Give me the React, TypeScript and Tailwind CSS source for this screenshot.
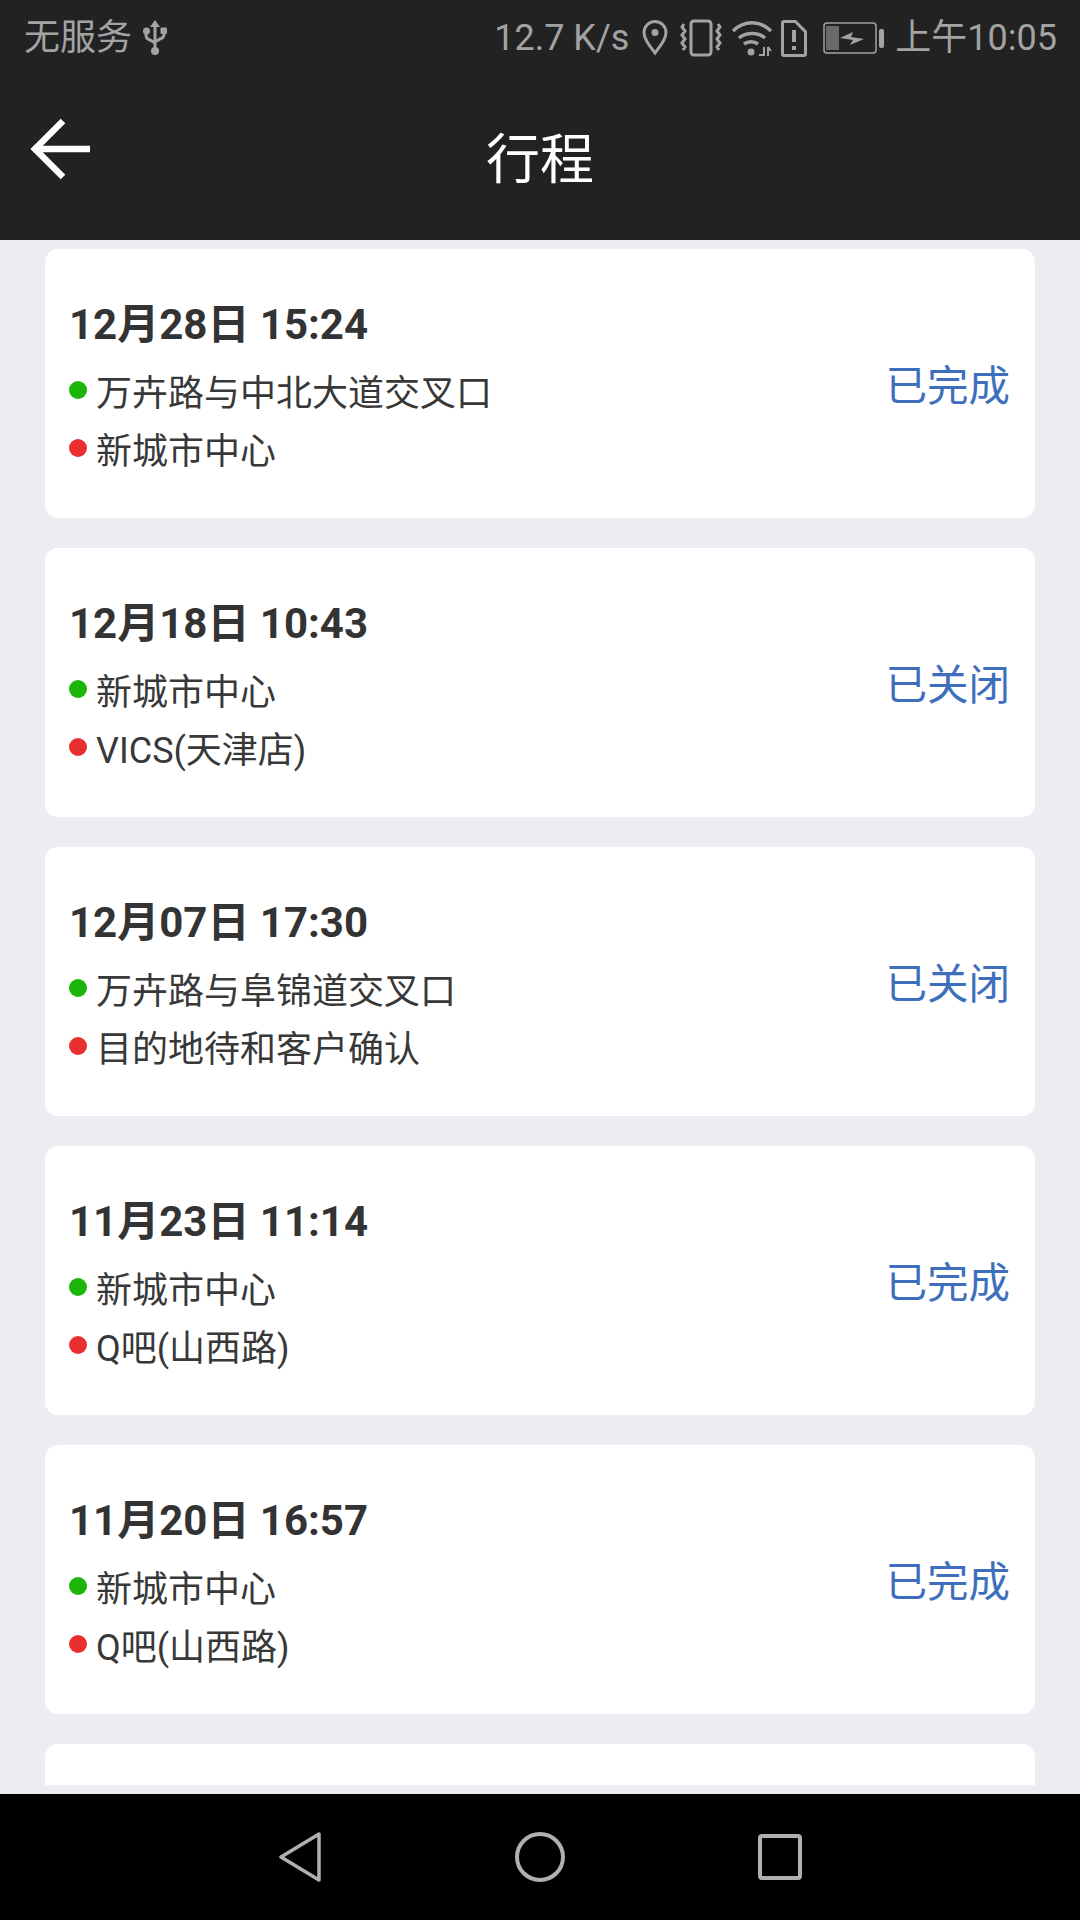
const font = "font-['Roboto','Noto_Sans_CJK_SC',sans-serif]";

type Trip = { date: string; from: string; to: string; status: string };

const trips: Trip[] = [
  { date: "12月28日 15:24", from: "万卉路与中北大道交叉口", to: "新城市中心", status: "已完成" },
  { date: "12月18日 10:43", from: "新城市中心", to: "VICS(天津店)", status: "已关闭" },
  { date: "12月07日 17:30", from: "万卉路与阜锦道交叉口", to: "目的地待和客户确认", status: "已关闭" },
  { date: "11月23日 11:14", from: "新城市中心", to: "Q吧(山西路)", status: "已完成" },
  { date: "11月20日 16:57", from: "新城市中心", to: "Q吧(山西路)", status: "已完成" },
];

function StatusBar() {
  return (
    <div className="h-[76px] pl-[24px] pr-[23px] flex items-center justify-between text-[#a3a3a3]">
      <div className="flex items-center gap-[11px]">
        <span className="text-[36px] leading-none">无服务</span>
        <svg width="24" height="36" viewBox="0 0 24 36" fill="none" stroke="#a3a3a3" strokeWidth="3">
          <path d="M12 3v28M3 12v3q0 4 4 5l5 3M21 12v2q0 4-4 5l-5 3" />
          <path d="M12 0l-5 7h10z" fill="#a3a3a3" stroke="none" />
          <circle cx="12" cy="31" r="4" fill="#a3a3a3" stroke="none" />
          <circle cx="3.5" cy="11" r="3.500" fill="#a3a3a3" stroke="none" />
          <rect x="17.500" y="7.500" width="6.500" height="6.500" rx="1" fill="#a3a3a3" stroke="none" />
        </svg>
      </div>
      <div className="flex items-center">
        <span className="text-[36px] leading-none mr-[13px]">12.7 K/s</span>
        <svg width="26" height="36" viewBox="0 0 26 36" fill="none" stroke="#a3a3a3" strokeWidth="3" className="mr-[12px]">
          <path d="M13 33C7 25 2 19 2 12.500a11 11 0 0 1 22 0C24 19 19 25 13 33z" />
          <circle cx="13" cy="12.500" r="3.500" fill="#a3a3a3" stroke="none" />
        </svg>
        <svg width="42" height="38" viewBox="0 0 42 38" fill="none" stroke="#a3a3a3" strokeWidth="3" className="mr-[10px]">
          <rect x="11" y="2" width="20" height="34" rx="3" strokeWidth="3" />
          <path d="M4 5l-2 3 3 4-3 4 3 4-3 4 3 4-2 3M38 5l2 3-3 4 3 4-3 4 3 4-3 4 2 3" />
        </svg>
        <svg width="40" height="38" viewBox="0 0 40 38" fill="none" stroke="#a3a3a3" strokeWidth="3.500" className="mr-[9px]">
          <path d="M1 12c11-11 27-11 38 0M7 19c7-6 19-6 26 0M12 25c4-3 10-3 14 0" />
          <circle cx="19" cy="33" r="3.500" fill="#a3a3a3" stroke="none" />
          <path d="M27 36h6M32 28v9M36 28v9M36 28l3 4" strokeWidth="2" />
        </svg>
        <svg width="26" height="37" viewBox="0 0 26 37" className="mr-[16px]">
          <path
            fillRule="evenodd"
            fill="#a3a3a3"
            d="M3 0h12l11 11v23a3 3 0 0 1-3 3H3a3 3 0 0 1-3-3V3a3 3 0 0 1 3-3zM3 3v31h20V12.500L13.800 3zM11 10h4v12h-4zM11 26h4v4h-4z"
          />
        </svg>
        <svg width="61" height="32" viewBox="0 0 61 32" fill="none" className="mr-[11px]">
          <rect x="1" y="1" width="52" height="30" rx="3" stroke="#a3a3a3" strokeWidth="1.500" />
          <rect x="3" y="4" width="13" height="24" fill="#6a6a6a" />
          <path d="M17 16l13-6-2 5 13 2-14 6 3-5z" fill="#a3a3a3" />
          <rect x="56" y="7" width="5" height="19" rx="2" fill="#a3a3a3" />
        </svg>
        <span className="text-[36px] leading-none">上午10:05</span>
      </div>
    </div>
  );
}

function Toolbar() {
  return (
    <div className="h-[164px] relative flex items-center justify-center pt-[6px]">
      <svg width="62" height="62" viewBox="0 0 62 62" fill="none" stroke="#ffffff" strokeWidth="6.500" className="absolute left-[30px] top-[42px]">
        <path d="M3 31h57M33 3L5 31l28 28" />
      </svg>
      <span className="text-[54px] leading-none text-white">行程</span>
    </div>
  );
}

function TripCard({ trip }: { trip: Trip }) {
  return (
    <div className="h-[269px] shrink-0 rounded-[13px] bg-white pl-[24px] pr-[25px] flex justify-between">
      <div className="flex flex-col pt-[52px]">
        <div className="text-[42px] leading-[48px] font-bold text-[#333333]">{trip.date}</div>
        <div className="flex items-center mt-[21px] h-[48px]">
          <span className="w-[18px] h-[18px] rounded-full bg-[#1cb50a] mr-[9px] mb-[8px]" />
          <span className="text-[36px] leading-none text-[#383838]">{trip.from}</span>
        </div>
        <div className="flex items-center mt-[10px] h-[48px]">
          <span className="w-[18px] h-[18px] rounded-full bg-[#e92f2f] mr-[9px] mb-[8px]" />
          <span className="text-[36px] leading-none text-[#383838]">{trip.to}</span>
        </div>
      </div>
      <div className="pt-[117px] text-[41.5px] leading-none text-[#3e6fbd]">{trip.status}</div>
    </div>
  );
}

function NavBar() {
  return (
    <div className="h-[126px] bg-black flex items-center justify-center">
      <div className="flex items-center gap-[193px]">
        <svg width="44" height="50" viewBox="0 0 44 50" fill="none" stroke="#b0b0b0" strokeWidth="3.500" strokeLinejoin="round">
          <path d="M41 2v46L3 25z" />
        </svg>
        <svg width="50" height="50" viewBox="0 0 50 50" fill="none" stroke="#b0b0b0" strokeWidth="4">
          <circle cx="25" cy="25" r="23" />
        </svg>
        <svg width="44" height="46" viewBox="0 0 44 46" fill="none" stroke="#b0b0b0" strokeWidth="4" strokeLinejoin="round">
          <rect x="2" y="2" width="40" height="42" rx="2" />
        </svg>
      </div>
    </div>
  );
}

export default function App() {
  return (
    <div className={`${font} w-[1080px] h-[1920px] flex flex-col overflow-hidden bg-[#ecedf2]`}>
      <header className="h-[240px] shrink-0 bg-[#222222]">
        <StatusBar />
        <Toolbar />
      </header>
      <main className="h-[1545px] shrink-0 overflow-hidden px-[45px] pt-[9px] flex flex-col gap-[30px]">
        {trips.map((trip) => (
          <TripCard key={trip.date} trip={trip} />
        ))}
        <div className="h-[269px] shrink-0 rounded-[13px] bg-white" />
      </main>
      <div className="h-[9px] shrink-0" />
      <NavBar />
    </div>
  );
}
